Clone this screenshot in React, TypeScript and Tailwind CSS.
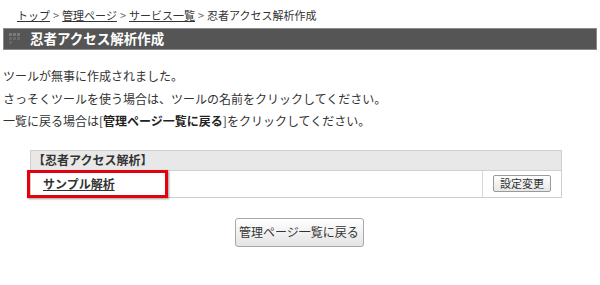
import React from "react";

const font = { fontFamily: '"Noto Sans CJK JP", "Noto Sans", sans-serif' };

export default function App() {
  return (
    <div className="w-[600px] h-[285px] bg-white text-[#333] overflow-hidden" style={font}>
      <div className="pl-[17px] pt-[4px] h-[26px] text-[11px] leading-[16px] text-[#333] flex items-center gap-[3px]">
        <span className="underline">トップ</span>
        <span className="text-[#666]">&gt;</span>
        <span className="underline">管理ページ</span>
        <span className="text-[#666]">&gt;</span>
        <span className="underline">サービス一覧</span>
        <span className="text-[#666]">&gt;</span>
        <span>忍者アクセス解析作成</span>
      </div>
      <div className="mx-[3px] mt-[2px] h-[22px] bg-[#555] border border-[#8a8a8a] flex items-center">
        <svg width="14" height="14" viewBox="0 0 14 14" className="ml-[4px]">
          <rect x="1" y="1" width="3" height="3" fill="#7a7a7a" />
          <rect x="5" y="1" width="3" height="3" fill="#7a7a7a" />
          <rect x="9" y="1" width="3" height="3" fill="#7a7a7a" />
          <rect x="1" y="5" width="3" height="3" fill="#6a6a6a" />
          <rect x="5" y="5" width="3" height="3" fill="#6a6a6a" />
          <rect x="9" y="5" width="3" height="3" fill="#6a6a6a" />
          <rect x="1" y="9" width="3" height="3" fill="#666" />
        </svg>
        <span className="ml-[8px] text-white font-bold text-[13.5px] leading-none">忍者アクセス解析作成</span>
      </div>
      <div className="pl-[3px] pt-[15px] text-[12px] leading-[22.5px] text-[#333]">
        <p>ツールが無事に作成されました。</p>
        <p>さっそくツールを使う場合は、ツールの名前をクリックしてください。</p>
        <p>
          一覧に戻る場合は[<span className="font-bold text-[#222]">管理ページ一覧に戻る</span>]をクリックしてください。
        </p>
      </div>
      <div className="ml-[30px] mt-[17px] w-[532px] border border-[#cfcfcf]">
        <div className="h-[20px] bg-[#e8e8e8] border-b border-[#d0d0d0] flex items-center pl-[2px] text-[12px] font-bold text-[#333]">
          【忍者アクセス解析】
        </div>
        <div className="h-[26px] flex bg-white relative">
          <div className="flex-1 flex items-center pl-[12px]">
            <span className="text-[12px] font-bold underline text-[#333]">サンプル解析</span>
          </div>
          <div className="w-[79px] border-l border-[#d8d8d8] flex items-center justify-center">
            <button className="h-[17px] px-[6px] text-[11px] leading-none text-[#333] border border-[#9a9a9a] rounded-[2px] bg-gradient-to-b from-white to-[#e6e6e6]">
              設定変更
            </button>
          </div>
          <div className="absolute left-[-4px] top-[-1px] w-[141px] h-[28px] border-[3.5px] border-[#e3000f] shadow-[1px_1px_2px_rgba(0,0,0,0.4)]" />
        </div>
      </div>
      <div className="flex justify-center mt-[20px]">
        <button className="ml-[-2px] h-[29px] w-[129px] whitespace-nowrap text-[12px] leading-none text-[#333] border border-[#a8a8a8] rounded-[3px] bg-gradient-to-b from-white to-[#e4e4e4]">
          管理ページ一覧に戻る
        </button>
      </div>
    </div>
  );
}
